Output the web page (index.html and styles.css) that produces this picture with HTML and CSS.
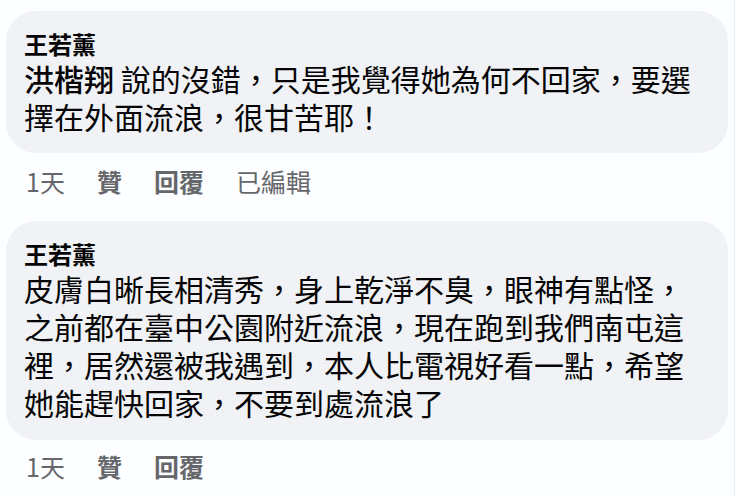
FILE: index.html
```html
<!DOCTYPE html>
<html lang="zh-Hant">
<head>
<meta charset="utf-8">
<title>留言</title>
<link rel="stylesheet" href="styles.css">
</head>
<body>
<div class="thread">
  <div class="comment">
    <div class="bubble">
      <div class="name">王若薰</div>
      <div class="text"><span class="mention">洪楷翔</span> 說的沒錯，只是我覺得她為何不回家，要選<br>擇在外面流浪，很甘苦耶！</div>
    </div>
    <div class="meta">
      <span class="time">1天</span>
      <span class="action">贊</span>
      <span class="action">回覆</span>
      <span class="edited">已編輯</span>
    </div>
  </div>
  <div class="comment">
    <div class="bubble bubble-tall">
      <div class="name">王若薰</div>
      <div class="text">皮膚白晰長相清秀，身上乾淨不臭，眼神有點怪，<br>之前都在臺中公園附近流浪，現在跑到我們南屯這<br>裡，居然還被我遇到，本人比電視好看一點，希望<br>她能趕快回家，不要到處流浪了</div>
    </div>
    <div class="meta meta-last">
      <span class="time">1天</span>
      <span class="action">贊</span>
      <span class="action">回覆</span>
    </div>
  </div>
</div>
</body>
</html>
```

FILE: styles.css
```css
html, body {
  margin: 0;
  padding: 0;
  background: #fdfeff;
}

body {
  font-family: "Noto Sans CJK TC", "Noto Sans", sans-serif;
  color: #050505;
}

.thread {
  width: 735px;
  height: 496px;
  box-sizing: border-box;
  padding: 11px 0 0 6px;
  border-right: 1px solid #eef1f4;
  display: flex;
  flex-direction: column;
}

.comment {
  display: flex;
  flex-direction: column;
}

.bubble {
  width: 722px;
  box-sizing: border-box;
  background: #f0f2f5;
  border-radius: 30px;
  padding: 18px 19px 18px 18px;
}

.bubble-tall {
  padding-bottom: 19px;
}

.name {
  font-size: 24px;
  font-weight: 700;
  line-height: 30px;
  color: #050505;
}

.text {
  font-size: 30px;
  line-height: 38px;
  white-space: nowrap;
}

.mention {
  font-weight: 500;
}

.meta {
  display: flex;
  gap: 32px;
  align-items: center;
  padding-left: 20px;
  margin-top: 13px;
  margin-bottom: 25px;
  font-size: 25px;
  line-height: 30px;
  color: #65676b;
}

.meta-last {
  margin-top: 11px;
  margin-bottom: 0;
}

.action {
  font-weight: 700;
}

.time, .edited {
  font-weight: 400;
}
```
